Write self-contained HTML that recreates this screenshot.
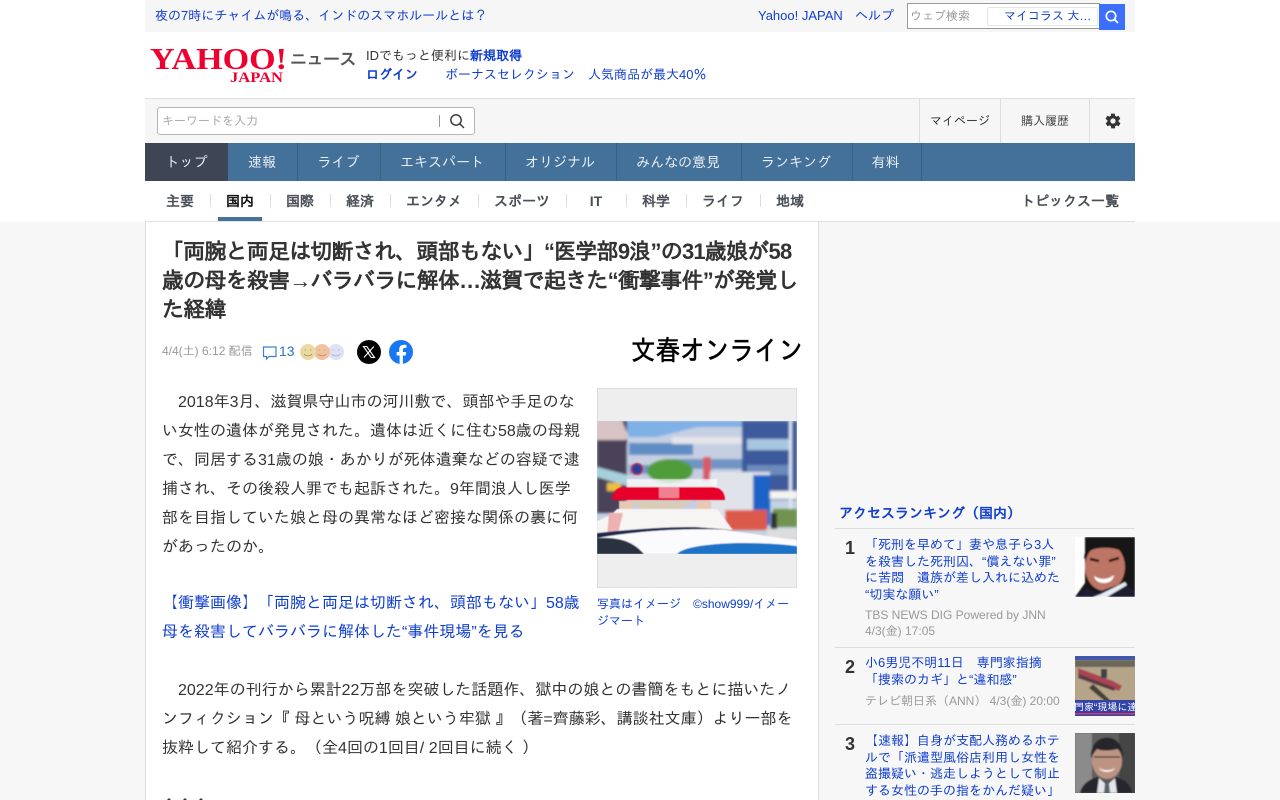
<!DOCTYPE html>
<html lang="ja"><head><meta charset="utf-8"><title>Yahoo!ニュース</title>
<style>
*{box-sizing:border-box}
html,body{margin:0;padding:0;width:1280px;height:800px;overflow:hidden}
body{background:#f7f7f7;font-family:"Liberation Sans","IPAGothic","Noto Sans CJK JP",sans-serif;color:#333}
#w{position:relative;width:1280px;height:800px;overflow:hidden}
.a{position:absolute;white-space:nowrap}
.l{color:#0f3ecf}
.c{text-align:center}
.sep{position:absolute;width:1px}
.t{position:absolute;top:143px;height:38px;line-height:38px;color:#e8edf2;font-size:14px;text-align:center;border-right:1px solid #38607f}
.s{position:absolute;top:192px;font-size:14px;font-weight:bold;color:#4a4f57;line-height:18px;white-space:nowrap;text-align:center}
.b{position:absolute;left:162px;font-size:16px;line-height:29px;white-space:nowrap;color:#333}
.b.l{color:#0f3ecf}
.r{position:absolute;left:865px;font-size:13px;line-height:16.5px;color:#0f3ecf;white-space:nowrap}
.g{position:absolute;left:865px;font-size:12px;line-height:16px;color:#999;white-space:nowrap}
.n{position:absolute;left:845px;font-size:18px;font-weight:bold;color:#333;line-height:20px}
</style></head><body><div id="w">
<div class="a" style="left:0;top:0;width:1280px;height:222px;background:#fff"></div>
<div class="a" style="left:145px;top:0;width:990px;height:32px;background:#f6f6f6"></div>
<div class="a l" style="left:155px;top:7px;font-size:13px;line-height:17px">夜の7時にチャイムが鳴る、インドのスマホルールとは？</div>
<div class="a l" style="left:758px;top:7px;font-size:13px;line-height:17px">Yahoo! JAPAN</div>
<div class="a l" style="left:855px;top:7px;font-size:13px;line-height:17px">ヘルプ</div>
<div class="a" style="left:907px;top:3px;width:193px;height:26px;background:#fff;border:1px solid #999"></div>
<div class="a" style="left:910px;top:8px;font-size:12px;line-height:16px;color:#999">ウェブ検索</div>
<div class="a" style="left:987px;top:7px;width:111px;height:19px;border:1px solid #e6e6e6;border-radius:2px;background:#fff"></div>
<div class="a l" style="left:1004px;top:8px;font-size:12px;line-height:16px">マイコラス 大…</div>
<div class="a" style="left:1099px;top:4px;width:26px;height:26px;background:#3d6fff"></div>
<svg class="a" style="left:1104px;top:9px" width="16" height="16" viewBox="0 0 16 16" fill="none" stroke="#fff" stroke-width="1.7"><circle cx="7" cy="7" r="4.7"/><path d="M10.4 10.4L14 14"/></svg>

<svg class="a" style="left:148px;top:44px" width="142" height="40" viewBox="0 0 142 40">
<text x="2" y="25" font-family="Liberation Serif" font-weight="bold" font-size="31" fill="#f0002f" textLength="137" lengthAdjust="spacingAndGlyphs">YAHOO!</text>
<text x="82" y="38" font-family="Liberation Serif" font-weight="bold" font-size="15" fill="#f0002f" textLength="53" lengthAdjust="spacingAndGlyphs">JAPAN</text></svg>
<div class="a" style="left:290px;top:49px;font-size:17px;line-height:22px;font-weight:bold;color:#555;letter-spacing:-.5px">ニュース</div>
<div class="a" style="left:366px;top:47px;font-size:13px;line-height:18px;color:#333">IDでもっと便利に<b class="l">新規取得</b></div>
<div class="a l" style="left:366px;top:66px;font-size:13px;line-height:18px;font-weight:bold">ログイン</div>
<div class="a l" style="left:445px;top:66px;font-size:13px;line-height:18px">ボーナスセレクション　人気商品が最大40％</div>

<div class="a" style="left:145px;top:98px;width:990px;height:45px;background:#f6f6f6;border-top:1px solid #e0e0e0"></div>
<div class="a" style="left:157px;top:107px;width:318px;height:28px;background:#fff;border:1px solid #b5b5b5;border-radius:3px"></div>
<div class="a" style="left:162px;top:113px;font-size:12px;line-height:17px;color:#aaa">キーワードを入力</div>
<div class="a" style="left:439px;top:115px;width:1px;height:12px;background:#999"></div>
<svg class="a" style="left:449px;top:113px" width="16" height="16" viewBox="0 0 16 16" fill="none" stroke="#333" stroke-width="1.4"><circle cx="7" cy="7" r="5.2"/><path d="M10.8 10.8L15 15"/></svg>
<div class="sep" style="left:919px;top:99px;height:44px;background:#ddd"></div>
<div class="sep" style="left:1000px;top:99px;height:44px;background:#ddd"></div>
<div class="sep" style="left:1089px;top:99px;height:44px;background:#ddd"></div>
<div class="a c" style="left:920px;top:113px;width:80px;font-size:12px;line-height:16px;color:#333">マイページ</div>
<div class="a c" style="left:1001px;top:113px;width:88px;font-size:12px;line-height:16px;color:#444">購入履歴</div>
<svg class="a" style="left:1104px;top:112px" width="18" height="18" viewBox="0 0 24 24"><path fill="#333" d="M19.4 13c.1-.3.1-.7.1-1s0-.7-.1-1l2.1-1.6c.2-.2.2-.4.1-.6l-2-3.5c-.1-.2-.4-.3-.6-.2l-2.5 1c-.5-.4-1.100-.7-1.700-1l-.4-2.600c0-.2-.2-.4-.5-.4h-4c-.3 0-.5.2-.5.400l-.4 2.600c-.6.3-1.200.6-1.700 1l-2.500-1c-.2-.1-.5 0-.6.2l-2 3.500c-.1.2-.1.400.1.600L4.600 11c-.1.300-.1.700-.1 1s0 .7.100 1l-2.100 1.600c-.2.200-.2.400-.1.600l2 3.500c.1.200.4.300.6.200l2.500-1c.5.400 1.100.7 1.700 1l.4 2.600c0 .2.200.4.500.4h4c.3 0 .5-.2.500-.4l.4-2.600c.6-.3 1.200-.6 1.700-1l2.500 1c.2.100.5 0 .6-.2l2-3.500c.1-.2.100-.4-.1-.6L19.400 13zM12 15.500a3.500 3.500 0 1 1 0-7 3.500 3.500 0 0 1 0 7z"/></svg>

<div class="a" style="left:145px;top:143px;width:990px;height:38px;background:#44719a"></div>
<div class="t" style="left:145px;width:83px;background:#3e4554;border-right:0">トップ</div>
<div class="t" style="left:228px;width:70px;padding-right:1px">速報</div>
<div class="t" style="left:298px;width:83px;padding-right:1px">ライブ</div>
<div class="t" style="left:381px;width:125px;padding-right:2px">エキスパート</div>
<div class="t" style="left:506px;width:111px;padding-right:2px">オリジナル</div>
<div class="t" style="left:617px;width:125px;padding-right:2px">みんなの意見</div>
<div class="t" style="left:742px;width:111px;padding-right:2px">ランキング</div>
<div class="t" style="left:853px;width:69px;padding-right:3px">有料</div>

<div class="s" style="left:150px;width:60px">主要</div>
<div class="s" style="left:210px;width:60px;color:#111">国内</div>
<div class="s" style="left:270px;width:60px">国際</div>
<div class="s" style="left:330px;width:60px">経済</div>
<div class="s" style="left:390px;width:88px">エンタメ</div>
<div class="s" style="left:478px;width:88px">スポーツ</div>
<div class="s" style="left:566px;width:60px">IT</div>
<div class="s" style="left:626px;width:60px">科学</div>
<div class="s" style="left:686px;width:74px">ライフ</div>
<div class="s" style="left:760px;width:60px">地域</div>
<div class="s" style="left:1021px">トピックス一覧</div>
<div class="sep" style="left:210px;top:194px;height:13px;background:#ddd"></div>
<div class="sep" style="left:270px;top:194px;height:13px;background:#ddd"></div>
<div class="sep" style="left:330px;top:194px;height:13px;background:#ddd"></div>
<div class="sep" style="left:390px;top:194px;height:13px;background:#ddd"></div>
<div class="sep" style="left:478px;top:194px;height:13px;background:#ddd"></div>
<div class="sep" style="left:566px;top:194px;height:13px;background:#ddd"></div>
<div class="sep" style="left:626px;top:194px;height:13px;background:#ddd"></div>
<div class="sep" style="left:686px;top:194px;height:13px;background:#ddd"></div>
<div class="sep" style="left:760px;top:194px;height:13px;background:#ddd"></div>
<div class="a" style="left:218px;top:217px;width:44px;height:4px;background:#44719a"></div>
<div class="a" style="left:145px;top:221px;width:990px;height:1px;background:#e0e0e0"></div>

<div class="a" style="left:145px;top:222px;width:674px;height:600px;background:#fff;border:1px solid #ddd;border-top:0"></div>
<div class="a" style="left:162px;top:237px;font-size:22px;line-height:29px;font-weight:bold;color:#333;letter-spacing:-.78px">「両腕と両足は切断され、頭部もない」“医学部9浪”の31歳娘が58<br>歳の母を殺害→バラバラに解体…滋賀で起きた“衝撃事件”が発覚し<br>た経緯</div>

<div class="a" style="left:162px;top:343px;font-size:12px;line-height:16px;color:#999">4/4(土) 6:12 配信</div>
<svg class="a" style="left:262px;top:345px" width="16" height="16" viewBox="0 0 16 16" fill="none" stroke="#3f7fd0" stroke-width="1.2"><path d="M1.500 2h12.500v9.500H7l-2.500 2.500v-2.500H1.500z"/></svg>
<div class="a" style="left:279px;top:342px;font-size:14px;line-height:18px;color:#2f72cc">13</div>
<svg class="a" style="left:299px;top:343px" width="46" height="18" viewBox="0 0 46 18">
<circle cx="37" cy="9" r="8" fill="#dfe2f5"/><circle cx="23" cy="9" r="8" fill="#f0c3a0"/><circle cx="9" cy="9" r="8" fill="#ead9a0"/>
<g fill="none" stroke="#9a9060" stroke-width=".8"><path d="M5 11c2 2.500 6 2.500 8 0M5.500 7h1.500M11 7h1.500"/></g>
<g fill="none" stroke="#c08a60" stroke-width=".8"><path d="M19 11c2 2.500 6 2.500 8 0M19.500 7h1.500M25 7h1.500"/></g>
<g fill="none" stroke="#a0a8d8" stroke-width=".8"><path d="M33 11c2 2.500 6 2.500 8 0M33.500 7h1.500M39 7h1.500"/></g></svg>
<svg class="a" style="left:357px;top:340px" width="24" height="24" viewBox="0 0 24 24"><circle cx="12" cy="12" r="12" fill="#000"/><path d="M6.500 6.500h3.300l7.700 11h-3.300zM16.800 6.500L7 17.500" fill="none" stroke="#fff" stroke-width="1.100"/></svg>
<svg class="a" style="left:389px;top:340px" width="24" height="24" viewBox="0 0 24 24"><circle cx="12" cy="12" r="12" fill="#1877f2"/><path fill="#fff" d="M16.700 15.500l.5-3.500h-3.300V9.800c0-1 .5-1.900 2-1.900h1.500v-3s-1.400-.2-2.700-.2c-2.700 0-4.500 1.700-4.500 4.600V12H7.600v3.500h3v8.400a12 12 0 0 0 3.300 0v-8.400z"/></svg>
<div class="a" style="left:631px;top:338px;font-size:24.6px;line-height:28px;color:#000;-webkit-text-stroke:.5px #000;transform:scaleY(1.12);transform-origin:0 50%">文春オンライン</div>

<div class="b" style="top:388px">　2018年3月、滋賀県守山市の河川敷で、頭部や手足のな<br>い女性の遺体が発見された。遺体は近くに住む58歳の母親<br>で、同居する31歳の娘・あかりが死体遺棄などの容疑で逮<br>捕され、その後殺人罪でも起訴された。9年間浪人し医学<br>部を目指していた娘と母の異常なほど密接な関係の裏に何<br>があったのか。</div>
<div class="b l" style="top:589px">【衝撃画像】「両腕と両足は切断され、頭部もない」58歳<br>母を殺害してバラバラに解体した“事件現場”を見る</div>
<div class="b" style="top:676px">　2022年の刊行から累計22万部を突破した話題作、獄中の娘との書簡をもとに描いたノ<br>ンフィクション『 母という呪縛 娘という牢獄 』（著=齊藤彩、講談社文庫）より一部を<br>抜粋して紹介する。（全4回の1回目/ 2回目に続く ）</div>
<div class="b" style="top:797px;font-size:14px;line-height:16px;font-weight:bold;letter-spacing:2px">◆◆◆</div>

<div class="a" style="left:597px;top:388px;width:200px;height:200px;background:#eee;border:1px solid #ddd"></div>
<svg class="a" style="left:597px;top:421px" width="200" height="133" viewBox="0 0 200 133">
<defs><filter id="bl" x="-5%" y="-5%" width="110%" height="110%"><feGaussianBlur stdDeviation="1.200"/></filter><filter id="b2"><feGaussianBlur stdDeviation=".6"/></filter><clipPath id="cp"><rect width="200" height="133"/></clipPath></defs>
<g clip-path="url(#cp)">
<rect width="200" height="133" fill="#c4d2e6"/>
<g filter="url(#bl)">
<rect x="0" width="200" height="16" fill="#7fb0e6"/>
<path d="M28 24L100 6h50v90H28z" fill="#c6cfe2"/>
<rect x="32" y="22" width="64" height="12" fill="#5f8cc4"/>
<rect x="32" y="44" width="40" height="9" fill="#6f95c6"/>
<rect x="75" y="16" width="70" height="7" fill="#e4e4ea"/>
<rect x="75" y="38" width="70" height="10" fill="#6f94c4"/>
<rect x="145" y="0" width="55" height="79" fill="#3c5a9c"/>
<rect x="150" y="18" width="44" height="11" fill="#a8c6e0"/>
<rect x="150" y="44" width="44" height="10" fill="#6c8abc"/>
<rect x="192" y="0" width="3" height="100" fill="#dfe6f0"/>
<rect x="0" y="0" width="30" height="92" fill="#4a4258"/>
<path d="M0 0h25l7 16-4 3H0z" fill="#d9c3c4"/>
<path d="M0 46l30 8v11L0 56z" fill="#a8d0dc"/>
<rect x="10" y="62" width="14" height="8" fill="#e9c040"/>
<ellipse cx="73" cy="50" rx="23" ry="12" fill="#4f9c3a"/>
<rect x="106" y="36" width="8" height="24" fill="#d85a6a"/>
<rect x="113" y="51" width="60" height="50" fill="#e0e4ea"/>
<rect x="156" y="54" width="17" height="50" fill="#1d63c8"/>
<rect x="173" y="70" width="27" height="8" fill="#f4f4f0"/>
<rect x="128" y="89" width="42" height="20" fill="#dc5a4c"/>
<rect x="176" y="88" width="24" height="18" fill="#6f9450"/>
<rect x="174" y="92" width="6" height="24" fill="#333"/>
<rect x="170" y="108" width="30" height="10" fill="#ddd"/>
</g>
<g filter="url(#b2)">
<circle cx="40" cy="48" r="5.500" fill="#2a3f9e" stroke="#d03040" stroke-width="1.200"/>
<rect x="30" y="58" width="90" height="9" fill="#fff" opacity=".7"/>
<path d="M15 79c0-8 5-13 12-13h88c8 0 13 5 13 13z" fill="#e8062b"/>
<rect x="62" y="66" width="20" height="11" fill="#f08090"/>
<path d="M30 80h66l-14 8H46z" fill="#d9cdb8"/>
<rect x="22" y="80" width="14" height="8" fill="#e8c8b4"/><rect x="100" y="80" width="14" height="8" fill="#e8c8b4"/>
<path d="M0 100l14-6 6-6h100l16 21-118 8H0z" fill="#f7f4f4"/>
<path d="M12 92h14l-6 24H10z" fill="#eeb0b0"/>
<path d="M0 113c50-6 100-10 170 2l30 4v14H0z" fill="#fbfbfd"/>
<path d="M0 112c30-3 60-6 98-6l40 3c-50-2-90 0-138 8z" fill="#1e2b50"/>
<path d="M0 117c20-1 35 2 47 16H0z" fill="#2a3340"/>
<path d="M80 133c6-7 30-10 60-11 25 0 45 1 60 3v8z" fill="#1f72c6"/>
</g></g>
</svg>
<div class="a l" style="left:597px;top:596px;font-size:12px;line-height:17px">写真はイメージ　©show999/イメー<br>ジマート</div>

<div class="a" style="left:839px;top:504px;font-size:14px;line-height:18px;font-weight:bold;color:#0f3ecf">アクセスランキング（国内）</div>
<div class="a" style="left:835px;top:528px;width:300px;height:1px;background:#ddd"></div>
<div class="n" style="top:538px">1</div>
<div class="r" style="top:537px">「死刑を早めて」妻や息子ら3人<br>を殺害した死刑囚、“償えない罪”<br>に苦悶　遺族が差し入れに込めた<br>“切実な願い”</div>
<div class="g" style="top:607px">TBS NEWS DIG Powered by JNN<br>4/3(金) 17:05</div>
<svg class="a" style="left:1075px;top:537px" width="60" height="60" viewBox="0 0 60 60">
<defs><filter id="b3"><feGaussianBlur stdDeviation=".9"/></filter></defs>
<rect width="60" height="60" fill="#fff"/><g filter="url(#b3)"><path d="M10 0h50v60H0l10-14z" fill="#191418"/>
<ellipse cx="30" cy="30" rx="20" ry="24" fill="#bd7565"/><path d="M9 22C10 8 18 1 30 1c12 0 20 6 22 20l-4-6c-6-5-26-6-33-1z" fill="#191418"/>
<path d="M15 22l9 2M34 24l10-3" stroke="#2a1510" stroke-width="2.500"/>
<path d="M19 39c6 4 14 4 20-1-1 6-5 8-10 8-5 0-9-2-10-7z" fill="#fff"/>
<path d="M0 60l12-9 8 5 28-10 12 8v6z" fill="#1a1c30"/><path d="M18 60l8-3 24-12 2 3-20 12z" fill="#e6ecf4"/></g></svg>
<div class="a" style="left:835px;top:647px;width:300px;height:1px;background:#ddd"></div>
<div class="n" style="top:657px">2</div>
<div class="r" style="top:655px">小6男児不明11日　専門家指摘<br>「捜索のカギ」と“違和感”</div>
<div class="g" style="top:693px">テレビ朝日系（ANN） 4/3(金) 20:00</div>
<svg class="a" style="left:1075px;top:656px" width="60" height="60" viewBox="0 0 60 60">
<rect width="60" height="60" fill="#a8967c"/><rect width="60" height="4" fill="#4057b0"/>
<g filter="url(#b3)"><rect y="4" width="60" height="7" fill="#6b675c"/>
<path d="M0 11h60v34H0z" fill="#b5a488"/>
<path d="M3 12l35 13 9 5-3 5L3 20z" fill="#a94452"/><path d="M4 18l36 14-1 3L3 22z" fill="#5a3a40"/><path d="M18 28l18 17-5 1L14 32z" fill="#443f34"/>
<rect x="26" y="13" width="6" height="9" fill="#38404a"/></g>
<rect y="44" width="60" height="14" fill="#3343a8"/><rect y="57" width="60" height="1.500" fill="#e0355a"/><rect y="58.500" width="60" height="1.500" fill="#3343a8"/>
<text x="-1" y="54.500" font-size="10" fill="#fff">門家“現場に達</text></svg>
<div class="a" style="left:835px;top:724px;width:300px;height:1px;background:#ddd"></div>
<div class="n" style="top:734px">3</div>
<div class="r" style="top:733px">【速報】自身が支配人務めるホテ<br>ルで「派遣型風俗店利用し女性を<br>盗撮疑い・逃走しようとして制止<br>する女性の手の指をかんだ疑い」</div>
<svg class="a" style="left:1075px;top:733px" width="60" height="60" viewBox="0 0 60 60">
<rect width="60" height="60" fill="#5f5f5f"/><g filter="url(#b3)"><rect width="17" height="60" fill="#8b8b8b"/><rect x="44" width="16" height="60" fill="#454545"/>
<ellipse cx="32" cy="28" rx="15" ry="18" fill="#bd9482"/><path d="M16 25c-2-26 33-28 32 0-2-6-4-8-6-9-6 2-16 2-20 0-2 2-4 5-6 9z" fill="#27262a"/>
<path d="M19 24h26" stroke="#2a2a2a" stroke-width="1.300"/><path d="M24 35c4 3 12 3 16 0-2 5-14 5-16 0z" fill="#fff"/>
<path d="M5 60c2-10 12-15 18-16l9 6 9-6c7 2 15 6 16 16z" fill="#28282e"/><path d="M24 45l8 7 8-7 2 15H22z" fill="#e4e6ea"/><path d="M30 50h4l1 10h-6z" fill="#59606b"/></g></svg>
</div></body></html>
